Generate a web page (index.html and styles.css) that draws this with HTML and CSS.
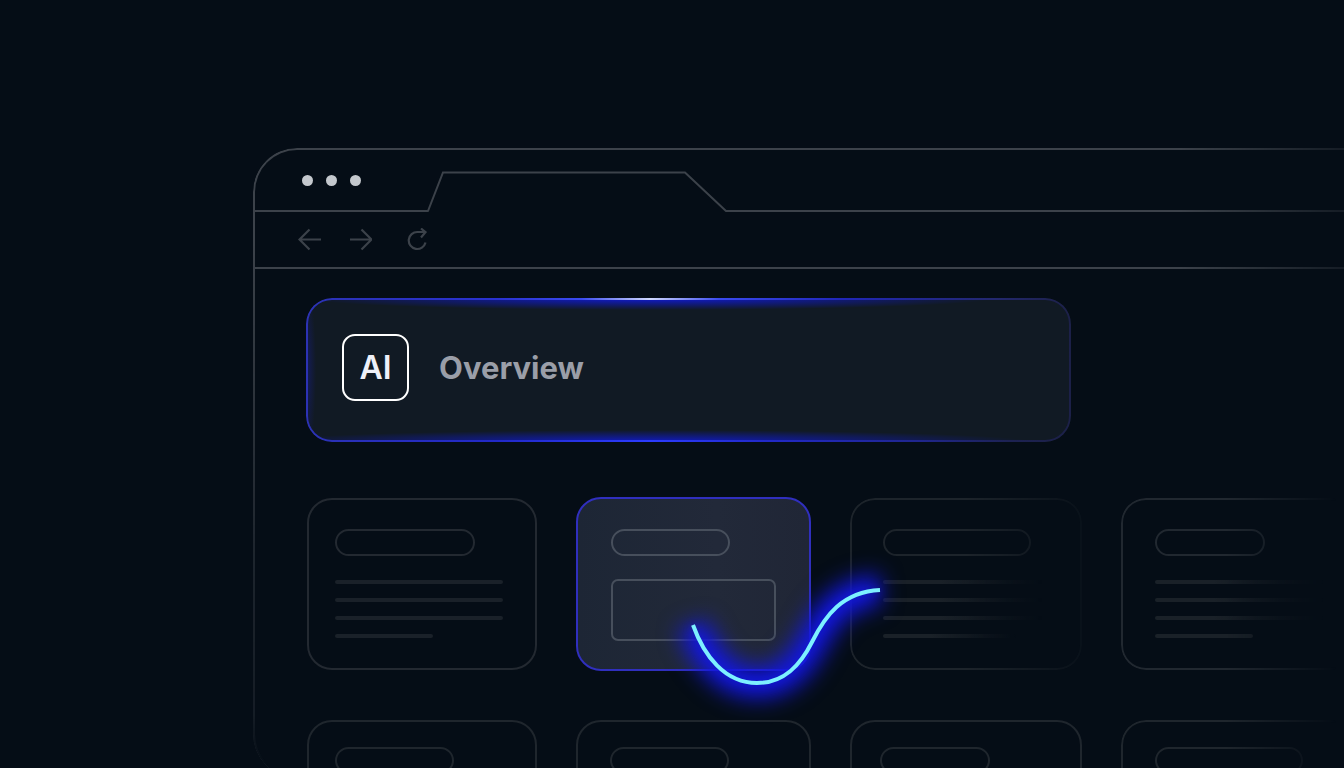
FILE: index.html
```html
<!DOCTYPE html>
<html lang="en">
<head>
<meta charset="utf-8">
<meta name="viewport" content="width=device-width, initial-scale=1">
<title>AI Overview</title>
<link rel="stylesheet" href="styles.css">
</head>
<body>
<main class="window">
  <header class="chrome">
    <div class="tab-strip">
      <div class="strip-start">
        <span class="dot"></span><span class="dot"></span><span class="dot"></span>
      </div>
      <svg class="tab" viewBox="0 0 298 42" aria-hidden="true"><path d="M0 41L15 2.500H257L298 41"/></svg>
      <div class="strip-end"></div>
    </div>
    <nav class="toolbar" aria-label="Navigation">
      <button class="nav-button" type="button" aria-label="Back"><svg viewBox="0 0 24 24"><path d="M23 11.500H1.500M11.500 1.500L1.500 11.500L11.500 21.500"/></svg></button>
      <button class="nav-button" type="button" aria-label="Forward"><svg viewBox="0 0 24 24"><path d="M2 11.500H23.500M13.500 1.500L23.500 11.500L13.500 21.500"/></svg></button>
      <button class="nav-button reload" type="button" aria-label="Reload"><svg viewBox="0 0 24 24"><path d="M19.500 14.500A8.500 8.500 0 1 1 11.500 4H19M15 .500L19.500 4.200L15 9.500"/></svg></button>
    </nav>
  </header>

  <div class="content">
    <section class="overview">
      <span class="badge">AI</span>
      <h1 class="overview-title">Overview</h1>
    </section>

    <section class="results" aria-label="Results">
      <article class="card">
        <div class="pill"></div>
        <div class="lines"><i></i><i></i><i></i><i class="short"></i></div>
      </article>
      <article class="card active">
        <div class="pill medium"></div>
        <div class="picture"></div>
        <svg class="wave" aria-hidden="true">
          <defs>
            <filter id="glow" x="-50%" y="-80%" width="200%" height="260%" color-interpolation-filters="sRGB"><feGaussianBlur stdDeviation="11"/></filter>
            <filter id="halo" x="-50%" y="-80%" width="200%" height="260%" color-interpolation-filters="sRGB"><feGaussianBlur stdDeviation="5"/></filter>
          </defs>
          <path class="wave-glow" d="M115 126C126 157 147 184 179 184C207 184 223 165 234 143C247 117 264 93 302 91"/>
          <path class="wave-halo" d="M115 126C126 157 147 184 179 184C207 184 223 165 234 143C247 117 264 93 302 91"/>
          <path class="wave-line" d="M115 126C126 157 147 184 179 184C207 184 223 165 234 143C247 117 264 93 302 91"/>
        </svg>
      </article>
      <article class="card third fade">
        <div class="pill large"></div>
        <div class="lines"><i></i><i></i><i></i><i class="long"></i></div>
      </article>
      <article class="card fourth fade-edge">
        <div class="pill small"></div>
        <div class="lines"><i></i><i></i><i></i><i class="short"></i></div>
      </article>

      <article class="card lower"><div class="pill medium"></div></article>
      <article class="card lower second"><div class="pill medium"></div></article>
      <article class="card lower third"><div class="pill small"></div></article>
      <article class="card lower fourth fade-edge"><div class="pill large"></div></article>
    </section>
  </div>
</main>
</body>
</html>
```
FILE: styles.css
```css
* { box-sizing: border-box; }

body {
  margin: 0;
  height: 100vh;
  overflow: hidden;
  background: #050d16;
  font-family: Inter, "Liberation Sans", sans-serif;
}

.window {
  --line: #3c424a;
  position: relative;
  margin: 148px 0 0 253px;
  padding: 2px 0 0 2px;
  height: 630px;
}

.window::before {
  content: "";
  position: absolute;
  inset: 0;
  border: 2px solid var(--line);
  border-right: 0;
  border-radius: 44px 0 0 44px;
  pointer-events: none;
  -webkit-mask: linear-gradient(#000 15%, rgba(0,0,0,.45) 65%, rgba(0,0,0,.3) 90%, transparent 98%), linear-gradient(90deg, #000 85%, rgba(0,0,0,.3));
  -webkit-mask-composite: source-in;
  mask-composite: intersect;
}

.chrome {
  -webkit-mask-image: linear-gradient(90deg, #000 85%, rgba(0,0,0,.3));
  mask-image: linear-gradient(90deg, #000 85%, rgba(0,0,0,.3));
}

.tab-strip {
  display: flex;
  align-items: flex-end;
  height: 62px;
}

.strip-start,
.strip-end {
  height: 100%;
  border-bottom: 2px solid var(--line);
}

.strip-start {
  display: flex;
  align-items: flex-start;
  gap: 13px;
  width: 173px;
  padding: 25px 0 0 47px;
}

.strip-end { flex: 1; }

.dot {
  width: 11px;
  height: 11px;
  border-radius: 50%;
  background: #c4c8cd;
}

.tab {
  display: block;
  width: 298px;
  height: 42px;
  overflow: visible;
  fill: none;
  stroke: var(--line);
  stroke-width: 2;
  stroke-linecap: round;
}

.toolbar {
  display: flex;
  align-items: center;
  gap: 26px;
  height: 57px;
  padding-left: 43px;
  border-bottom: 2px solid var(--line);
}

.nav-button {
  width: 24px;
  height: 24px;
  padding: 0;
  border: 0;
  background: none;
}

.nav-button.reload { margin-left: 8px; }

.nav-button svg {
  display: block;
  fill: none;
  stroke: #3c424a;
  stroke-width: 2.2;
}

.content { padding: 29px 0 0 51px; }

.overview {
  position: relative;
  display: flex;
  align-items: center;
  gap: 30px;
  width: 73.7%;
  padding: 36px 36px 41px;
  border-radius: 26px;
  background:
    radial-gradient(ellipse 45% 12px at 45% 0, rgba(16,26,235,.9), transparent),
    radial-gradient(ellipse 50% 12px at 45% 100%, rgba(16,26,235,.8), transparent),
    radial-gradient(ellipse 10px 60% at 0 50%, rgba(24,30,150,.5), transparent),
    #111a24;
}

.overview::before {
  content: "";
  position: absolute;
  inset: 0;
  padding: 2px;
  border-radius: 26px;
  background:
    linear-gradient(90deg, #2c32b4, #2931d0 25%, #3a4af0 36%, #d0d8ff 45%, #3a4af0 54%, #2026b8 70%, #23286e 90%, #1c2048) top / 100% 50% no-repeat,
    linear-gradient(90deg, #2c32b4, #2229c8 25%, #2c3cff 45%, #2229c8 60%, #20268e 80%, #1d2252 92%, #1c2048) bottom / 100% 50% no-repeat;
  -webkit-mask: linear-gradient(#000 0 0) content-box, linear-gradient(#000 0 0);
  -webkit-mask-composite: xor;
  mask-composite: exclude;
}

.badge {
  display: flex;
  align-items: center;
  justify-content: center;
  width: 67px;
  height: 67px;
  border: 2px solid #fff;
  border-radius: 13px;
  color: #eef0f8;
  font-size: 32px;
  font-weight: 600;
  line-height: 40px;
}

.overview-title {
  margin: 0;
  color: #9a9ea8;
  font-size: 31px;
  font-weight: 700;
  line-height: 40px;
}

.results {
  display: grid;
  grid-template-columns: 230fr 235fr 232fr 234fr;
  grid-template-rows: 172px 172px;
  gap: 50px 39px;
  margin: 56px -11px 0 1px;
}

.card {
  --outline: #232931;
  min-width: 0;
  padding: 29px 26px 0;
  border: 2px solid var(--outline);
  border-radius: 25px;
}

.card.active {
  --outline: #474f5c;
  position: relative;
  z-index: 1;
  margin: -1px 0;
  padding: 30px 33px 0;
  border-color: #302fbe;
  background: linear-gradient(90deg, #1d2635, #222939 60%, #202636);
}

.card.third { --outline: #1d242b; padding-left: 31px; }
.card.fourth { --outline: #212830; padding-left: 32px; }
.card.lower { --outline: #1f262d; padding-top: 25px; }
.card.lower.second { padding-left: 32px; }
.card.lower.third { padding-left: 28px; }

.fade { -webkit-mask-image: linear-gradient(90deg, #000 50%, rgba(0,0,0,.2)); mask-image: linear-gradient(90deg, #000 50%, rgba(0,0,0,.2)); }
.fade-edge { -webkit-mask-image: linear-gradient(90deg, #000 45%, transparent 92%); mask-image: linear-gradient(90deg, #000 45%, transparent 92%); }

.pill {
  width: 140px;
  height: 27px;
  border: 2px solid var(--outline);
  border-radius: 14px;
}

.pill.small { width: 110px; }
.pill.medium { width: 119px; }
.pill.large { width: 148px; }

.lines {
  display: grid;
  gap: 14px;
  width: 168px;
  margin-top: 24px;
}

.lines i {
  height: 4px;
  border-radius: 2px;
  background: #1a2129;
}

.lines .short { width: 98px; }
.lines .long { width: 140px; }

.third .lines i { background: linear-gradient(90deg, #1a2128 35%, transparent 95%); }
.fourth .lines i { background: linear-gradient(90deg, #1a2128 35%, transparent 110%); }
.fourth .lines .short { background: #1a2128; }

.picture {
  height: 62px;
  margin-top: 23px;
  border: 2px solid var(--outline);
  border-radius: 7px;
}

.wave {
  position: absolute;
  inset: 0;
  width: 100%;
  height: 100%;
  overflow: visible;
  fill: none;
  pointer-events: none;
}

.wave-glow { stroke: #1216dc; stroke-width: 31; filter: url(#glow); }
.wave-halo { stroke: #1a20f0; stroke-width: 8; opacity: .3; filter: url(#halo); }
.wave-line { stroke: #7df0ff; stroke-width: 4; }
```
